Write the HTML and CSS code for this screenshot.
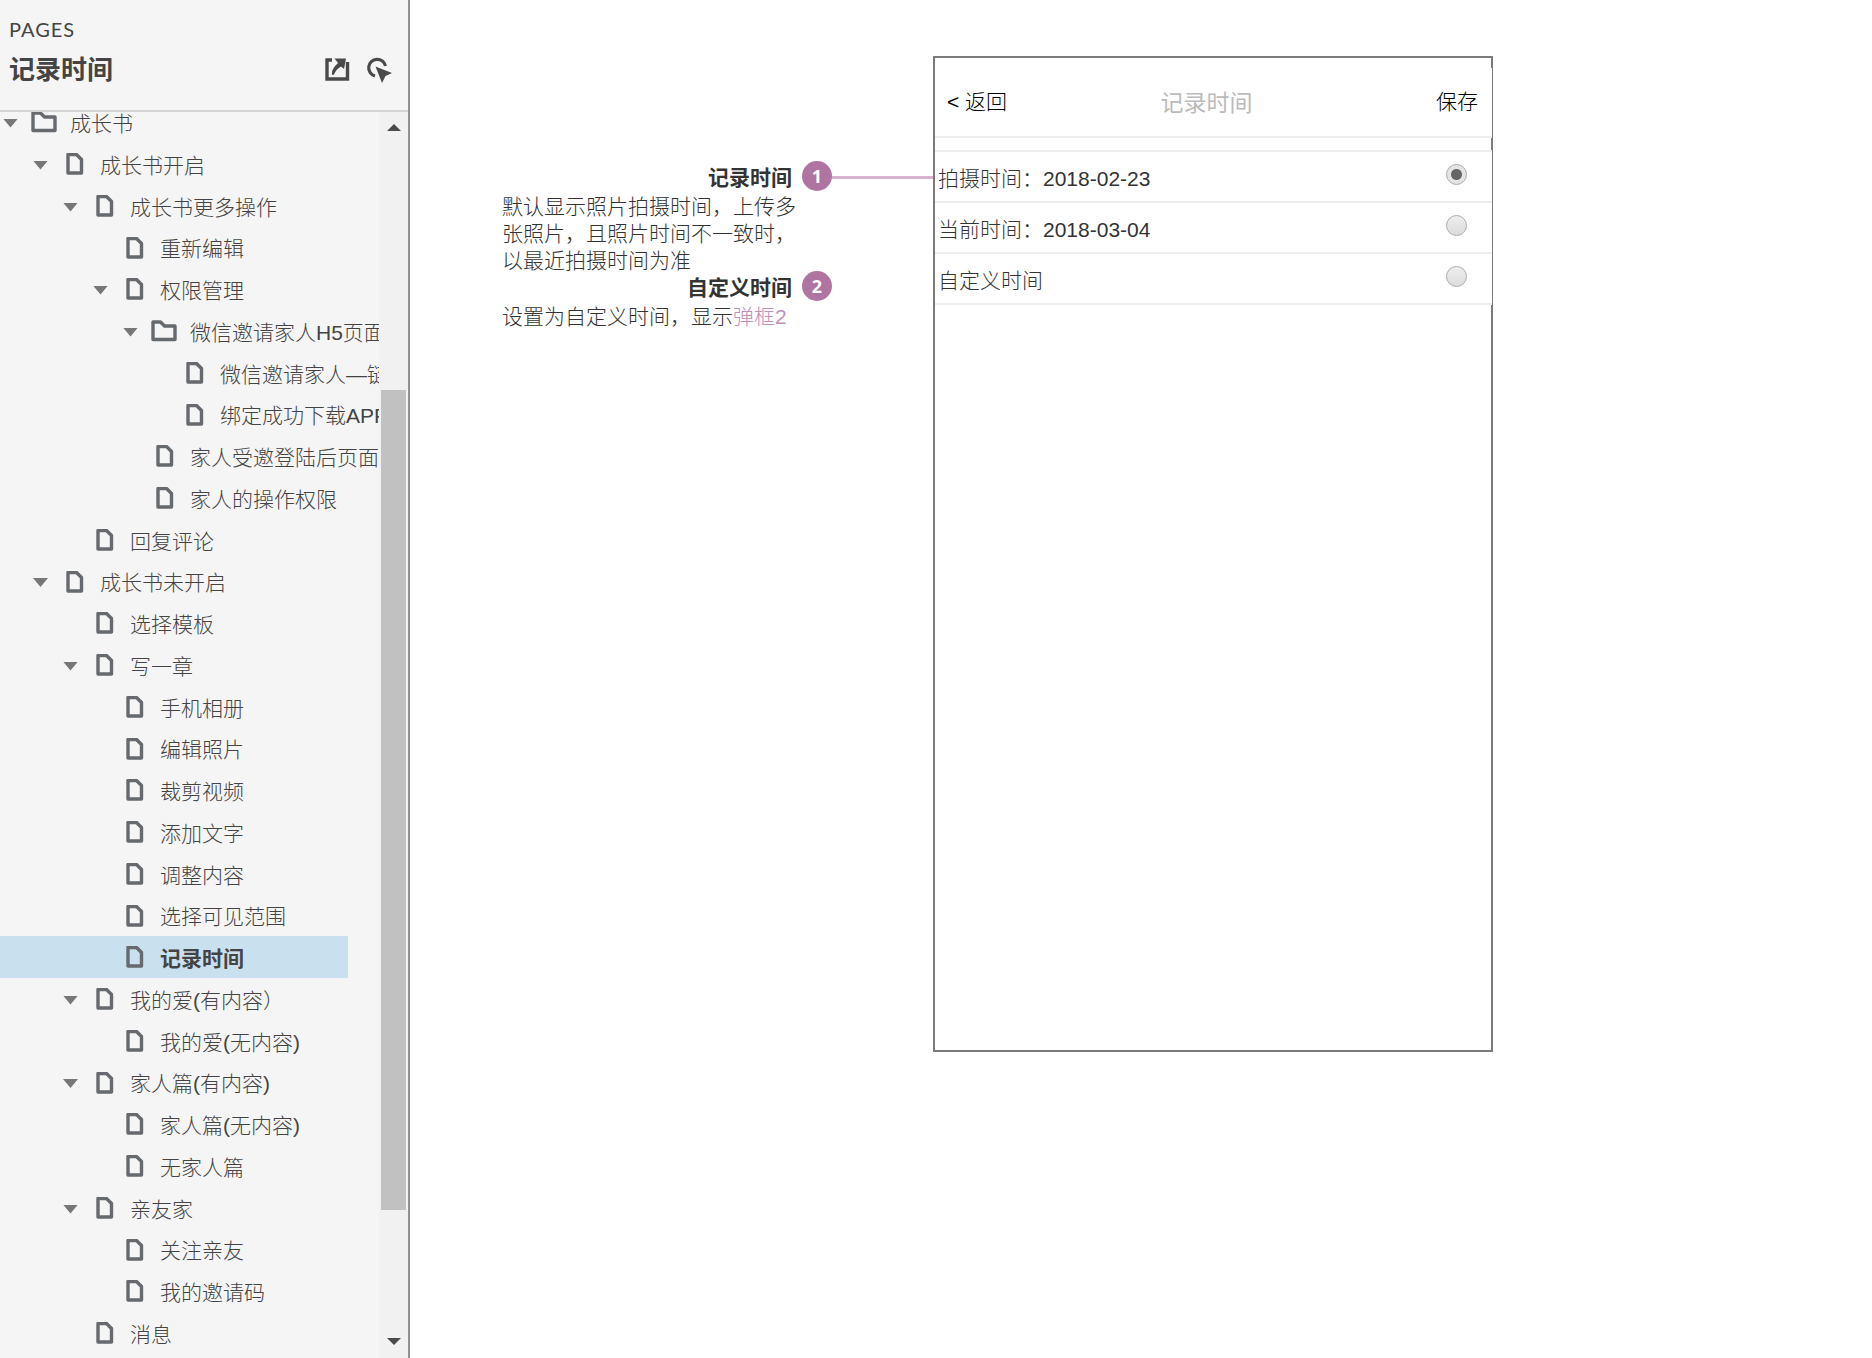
FILE: index.html
```html
<!DOCTYPE html>
<html lang="zh-CN">
<head>
<meta charset="utf-8">
<title>记录时间</title>
<link rel="stylesheet" href="styles.css">
</head>
<body>
<svg class="sprite" aria-hidden="true">
  <symbol id="doc" viewBox="0 0 26 22"><path d="M7 1.500h8.500l5 5v13.500h-13.500z" fill="none" stroke="#666a6e" stroke-width="3.400" stroke-linejoin="round"/></symbol>
  <symbol id="folder" viewBox="0 0 26 22"><path d="M2 2h7.500l4 4h10.500v13.500h-22z" fill="none" stroke="#666a6e" stroke-width="3.400" stroke-linejoin="round"/></symbol>
</svg>
<div class="app">
  <aside class="sidebar">
    <header class="side-head">
      <div class="side-label">PAGES</div>
      <div class="side-row">
        <h1 class="side-title">记录时间</h1>
        <button class="tool" type="button" aria-label="打开链接"><svg width="26" height="26" viewBox="0 0 26 26"><path d="M8 3H3V22H23.500V5" fill="none" stroke="#4a4a4a" stroke-width="3.400"/><path d="M10.500 1.500H22L20 12l-3-2.500c-3 2-5 3.500-7 8l-2 .5c-.5-5 2-8 6-12z" fill="#4a4a4a"/></svg></button>
        <button class="tool" type="button" aria-label="高亮交互"><svg width="26" height="26" viewBox="0 0 26 26"><path d="M19.500 9A8.500 8.500 0 1 0 9 19" fill="none" stroke="#4a4a4a" stroke-width="3.200"/><path d="M9.500 9.500L26 16l-6.500 3L16 26z" fill="#4a4a4a"/></svg></button>
      </div>
    </header>
    <div class="side-body">
      <nav class="tree-view" aria-label="页面">
        <ul class="tree">
          <li class="node l0"><button class="fold" type="button" aria-label="折叠"></button><svg class="icon"><use href="#folder"/></svg><a href="#">成长书</a></li>
          <li class="node l1"><button class="fold" type="button" aria-label="折叠"></button><svg class="icon"><use href="#doc"/></svg><a href="#">成长书开启</a></li>
          <li class="node l2"><button class="fold" type="button" aria-label="折叠"></button><svg class="icon"><use href="#doc"/></svg><a href="#">成长书更多操作</a></li>
          <li class="node l3 leaf"><svg class="icon"><use href="#doc"/></svg><a href="#">重新编辑</a></li>
          <li class="node l3"><button class="fold" type="button" aria-label="折叠"></button><svg class="icon"><use href="#doc"/></svg><a href="#">权限管理</a></li>
          <li class="node l4"><button class="fold" type="button" aria-label="折叠"></button><svg class="icon"><use href="#folder"/></svg><a href="#">微信邀请家人H5页面</a></li>
          <li class="node l5 leaf"><svg class="icon"><use href="#doc"/></svg><a href="#">微信邀请家人—链接</a></li>
          <li class="node l5 leaf"><svg class="icon"><use href="#doc"/></svg><a href="#">绑定成功下载APP</a></li>
          <li class="node l4 leaf"><svg class="icon"><use href="#doc"/></svg><a href="#">家人受邀登陆后页面</a></li>
          <li class="node l4 leaf"><svg class="icon"><use href="#doc"/></svg><a href="#">家人的操作权限</a></li>
          <li class="node l2 leaf"><svg class="icon"><use href="#doc"/></svg><a href="#">回复评论</a></li>
          <li class="node l1"><button class="fold" type="button" aria-label="折叠"></button><svg class="icon"><use href="#doc"/></svg><a href="#">成长书未开启</a></li>
          <li class="node l2 leaf"><svg class="icon"><use href="#doc"/></svg><a href="#">选择模板</a></li>
          <li class="node l2"><button class="fold" type="button" aria-label="折叠"></button><svg class="icon"><use href="#doc"/></svg><a href="#">写一章</a></li>
          <li class="node l3 leaf"><svg class="icon"><use href="#doc"/></svg><a href="#">手机相册</a></li>
          <li class="node l3 leaf"><svg class="icon"><use href="#doc"/></svg><a href="#">编辑照片</a></li>
          <li class="node l3 leaf"><svg class="icon"><use href="#doc"/></svg><a href="#">裁剪视频</a></li>
          <li class="node l3 leaf"><svg class="icon"><use href="#doc"/></svg><a href="#">添加文字</a></li>
          <li class="node l3 leaf"><svg class="icon"><use href="#doc"/></svg><a href="#">调整内容</a></li>
          <li class="node l3 leaf"><svg class="icon"><use href="#doc"/></svg><a href="#">选择可见范围</a></li>
          <li class="node l3 leaf current"><svg class="icon"><use href="#doc"/></svg><a href="#" aria-current="page">记录时间</a></li>
          <li class="node l2"><button class="fold" type="button" aria-label="折叠"></button><svg class="icon"><use href="#doc"/></svg><a href="#">我的爱(有内容）</a></li>
          <li class="node l3 leaf"><svg class="icon"><use href="#doc"/></svg><a href="#">我的爱(无内容)</a></li>
          <li class="node l2"><button class="fold" type="button" aria-label="折叠"></button><svg class="icon"><use href="#doc"/></svg><a href="#">家人篇(有内容)</a></li>
          <li class="node l3 leaf"><svg class="icon"><use href="#doc"/></svg><a href="#">家人篇(无内容)</a></li>
          <li class="node l3 leaf"><svg class="icon"><use href="#doc"/></svg><a href="#">无家人篇</a></li>
          <li class="node l2"><button class="fold" type="button" aria-label="折叠"></button><svg class="icon"><use href="#doc"/></svg><a href="#">亲友家</a></li>
          <li class="node l3 leaf"><svg class="icon"><use href="#doc"/></svg><a href="#">关注亲友</a></li>
          <li class="node l3 leaf"><svg class="icon"><use href="#doc"/></svg><a href="#">我的邀请码</a></li>
          <li class="node l2 leaf"><svg class="icon"><use href="#doc"/></svg><a href="#">消息</a></li>
        </ul>
      </nav>
      <div class="scrollbar" aria-hidden="true">
        <span class="scroll-end"><svg width="14" height="7" viewBox="0 0 14 7"><path d="M0 7l7-7 7 7z" fill="#4a4a4a"/></svg></span>
        <span class="track-before"></span>
        <span class="thumb"></span>
        <span class="track-after"></span>
        <span class="scroll-end"><svg width="14" height="7" viewBox="0 0 14 7"><path d="M0 0l7 7 7-7z" fill="#4a4a4a"/></svg></span>
      </div>
    </div>
  </aside>

  <main class="canvas">
    <section class="notes">
      <article class="note">
        <h2 class="note-title">记录时间</h2>
        <span class="marker">1</span>
        <p class="note-text">默认显示照片拍摄时间，上传多张照片，且照片时间不一致时，以最近拍摄时间为准</p>
      </article>
      <article class="note">
        <h2 class="note-title">自定义时间</h2>
        <span class="marker">2</span>
        <p class="note-text">设置为自定义时间，显示<a href="#">弹框2</a></p>
      </article>
    </section>
    <span class="connector"></span>
    <section class="phone">
      <header class="phone-head">
        <button class="nav-btn" type="button">&lt; 返回</button>
        <h2 class="phone-title">记录时间</h2>
        <button class="nav-btn save" type="button">保存</button>
      </header>
      <form class="options">
        <div class="option"><label for="t1">拍摄时间：2018-02-23</label><input id="t1" type="radio" name="time" checked></div>
        <div class="option"><label for="t2">当前时间：2018-03-04</label><input id="t2" type="radio" name="time"></div>
        <div class="option"><label for="t3">自定义时间</label><input id="t3" type="radio" name="time"></div>
      </form>
    </section>
  </main>
</div>
</body>
</html>
```
FILE: styles.css
```css
* { box-sizing: border-box; }

body {
  margin: 0;
  background: #fff;
  color: #333;
  font: 300 21px/27px "Liberation Sans", "Noto Sans CJK SC", sans-serif;
}

h1, h2, p, ul { margin: 0; padding: 0; }
button { padding: 0; border: 0; background: none; color: inherit; font: inherit; }
.sprite { display: none; }

.app { display: flex; height: 100vh; }

/* Sidebar */
.sidebar {
  display: flex;
  flex: none;
  flex-direction: column;
  width: 410px;
  border-right: 2px solid #8f9296;
  background: #f5f5f5;
  color: #444;
}
.side-head {
  height: 112px;
  padding: 15px 16px 0 9px;
  border-bottom: 2px solid #d5d5d5;
}
.side-label { font: 400 20px/28px Lato, sans-serif; letter-spacing: 1px; }
.side-row { display: flex; align-items: center; gap: 16px; height: 54px; }
.side-title { flex: 1; font-size: 26px; line-height: 36px; }
.tool { display: flex; }

.side-body { display: flex; flex: 1; min-height: 0; }
.tree-view { flex: 1; overflow: hidden; }
.tree { margin-top: -11px; list-style: none; }
.node {
  display: flex;
  align-items: center;
  gap: 13px;
  height: 42px;
  white-space: nowrap;
}
.node:nth-child(4n) { height: 41px; }
.node a { padding-top: 2px; color: inherit; text-decoration: none; }
.l0 { padding-left: 3px; }
.l1 { padding-left: 33px; }
.l2 { padding-left: 63px; }
.l3 { padding-left: 93px; }
.l4 { padding-left: 123px; }
.l5 { padding-left: 153px; }
.leaf::before { flex: none; width: 15px; content: ""; }
.fold {
  flex: none;
  width: 15px;
  height: 9px;
  margin-top: 2px;
  background: #777;
  clip-path: polygon(0 0, 100% 0, 50% 100%);
}
.icon { flex: none; width: 26px; height: 22px; }
.current { margin-right: 31px; background: #c9e0ef; font-weight: 700; }

.scrollbar {
  display: flex;
  flex: none;
  flex-direction: column;
  width: 29px;
  padding: 0 1px 2px 2px;
  background: #f1f1f1;
}
.scroll-end { display: flex; flex: none; align-items: center; justify-content: center; height: 30px; }
.track-before { flex: 248; }
.thumb { flex: 820; margin-right: 1px; background: #c1c1c1; }
.track-after { flex: 116; }

/* Canvas */
.canvas {
  display: flex;
  flex: 1;
  align-items: flex-start;
  padding: 56px 40px 40px 92px;
}
.notes { flex: none; width: 330px; padding-top: 105px; }
.note { display: grid; grid-template-columns: 296px 30px; column-gap: 4px; }
.note + .note { margin-top: -3px; }
.note-title { padding: 4px 6px 0 0; font-size: 21px; line-height: 26px; text-align: right; }
.marker {
  height: 30px;
  border-radius: 50%;
  background: #b074a0;
  color: #fff;
  font: 700 18px/30px "Noto Sans", sans-serif;
  text-align: center;
}
.note-text { grid-column: 1; padding-top: 2px; }
.note-text a { color: #c08fba; text-decoration: none; }
.connector { flex: none; width: 101px; height: 3px; margin-top: 120px; background: #d8b2ce; }

.phone {
  flex: none;
  width: 560px;
  min-height: 996px;
  padding-top: 10px;
  border: 2px solid #7b7b7d;
}
.phone-head {
  display: grid;
  grid-template-columns: 1fr auto 1fr;
  align-items: center;
  height: 70px;
  margin-right: -1px;
  padding: 0 14px 0 12px;
  border-bottom: 2px solid #eee;
  background: #fff;
  color: #000;
}
.nav-btn { justify-self: start; padding-bottom: 2px; }
.save { justify-self: end; }
.phone-title { padding: 2px 12px 0 0; color: #bbb; font-size: 23px; font-weight: 400; }
.options {
  margin: 12px -1px 0 0;
  border-top: 2px solid #eee;
  background: #fff;
}
.option {
  display: flex;
  align-items: center;
  justify-content: space-between;
  height: 51px;
  padding: 0 25px 0 3px;
  border-bottom: 2px solid #eee;
}
.option label { padding-top: 3px; }
.option input {
  appearance: none;
  width: 21px;
  height: 21px;
  margin: 0 0 5px;
  border: 1px solid #aaa;
  border-radius: 50%;
  background: linear-gradient(#eee, #dcdcdc);
}
.option input:checked { background: radial-gradient(circle, #666 5px, #e4e4e4 6px); }
```
